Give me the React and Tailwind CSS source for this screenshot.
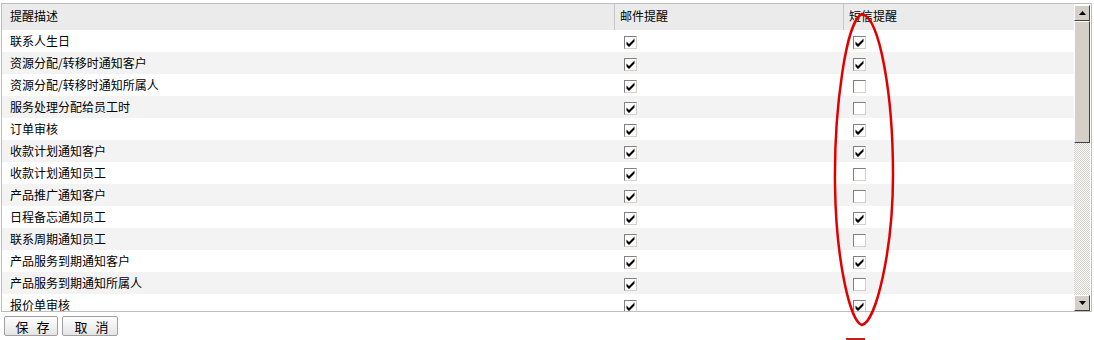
import React from 'react';

const rows = [
  ['联系人生日', true],
  ['资源分配/转移时通知客户', true],
  ['资源分配/转移时通知所属人', false],
  ['服务处理分配给员工时', false],
  ['订单审核', true],
  ['收款计划通知客户', true],
  ['收款计划通知员工', false],
  ['产品推广通知客户', false],
  ['日程备忘通知员工', true],
  ['联系周期通知员工', false],
  ['产品服务到期通知客户', true],
  ['产品服务到期通知所属人', false],
  ['报价单审核', true],
];

const Box = ({ checked }) => (
  <div className="w-[13px] h-[13px] border border-t-[#808080] border-l-[#808080] border-r-[#d4d0c8] border-b-[#d4d0c8] bg-white flex items-center justify-center">
    {checked && (
      <svg width="9" height="9" viewBox="0 0 9 9">
        <path d="M0.5 3.5 L3 6 L8.5 0.5 L8.5 3.5 L3 9 L0.5 6.5 Z" fill="#000" />
      </svg>
    )}
  </div>
);

const Arrow = ({ down }) => (
  <div className="w-[16px] h-[16px] bg-[#d4d0c8] border border-t-white border-l-white border-r-[#404040] border-b-[#404040] flex items-center justify-center">
    <svg width="7" height="4" viewBox="0 0 7 4">
      <path d={down ? 'M0 0 H7 L3.5 4 Z' : 'M0 4 H7 L3.5 0 Z'} fill="#000" />
    </svg>
  </div>
);

const Btn = ({ a, b, w }) => (
  <button className={`${w} h-[20px] border border-[#a0a0a0] rounded-[2px] bg-gradient-to-b from-white to-[#e4e4e4] text-[13px] leading-none flex items-center justify-center gap-[8px] pl-[3px]`}>
    <span>{a}</span>
    <span>{b}</span>
  </button>
);

export default function App() {
  return (
    <div className="relative w-[1094px] h-[340px] bg-white text-[12px] text-black overflow-hidden" style={{ fontFamily: '"Noto Sans CJK SC", "Noto Sans", sans-serif' }}>
      <div className="ml-[1px] mt-[3px] w-[1091px] h-[309px] border border-[#bdbdbd] flex">
        <div className="flex-1 overflow-hidden">
          <div className="grid grid-cols-[612px_229px_1fr] h-[26px] bg-[#ebebeb] items-center">
            <div className="pl-[8px] pb-[3px]">提醒描述</div>
            <div className="h-full border-l border-[#c8c8c8] pl-[5px] pt-[3px]">邮件提醒</div>
            <div className="h-full border-l border-[#c8c8c8] pl-[5px] pt-[3px]">短信提醒</div>
          </div>
          {rows.map(([label, sms], i) => (
            <div key={label} className={`grid grid-cols-[612px_229px_1fr] h-[22px] items-center ${i % 2 ? 'bg-[#f3f3f3]' : 'bg-white'}`}>
              <div className="pl-[8px]">{label}</div>
              <div className="pl-[10px] pt-[2px]"><Box checked /></div>
              <div className="pl-[10px] pt-[2px]"><Box checked={sms} /></div>
            </div>
          ))}
        </div>
        <div className="w-[16px] mr-[1px] mt-[1px] flex flex-col">
          <Arrow />
          <div className="h-[122px] bg-[#d4d0c8] border border-t-white border-l-white border-r-[#404040] border-b-[#404040]" />
          <div className="flex-1 bg-[repeating-conic-gradient(#d4d0c8_0_25%,#ffffff_0_50%)] bg-[length:2px_2px]" />
          <Arrow down />
        </div>
      </div>
      <div className="flex gap-[4px] ml-[4px] mt-[4px]">
        <Btn a="保" b="存" w="w-[54px]" />
        <Btn a="取" b="消" w="w-[56px]" />
      </div>
      <svg className="absolute left-0 top-0 pointer-events-none" width="1094" height="340">
        <path d="M862 14 C846 20 834 110 835 185 C836 260 850 322 862 325 C876 322 893 250 893 175 C893 95 880 18 862 14 Z" fill="none" stroke="#e00000" strokeWidth="2.5" />
      </svg>
      <div className="absolute left-[846px] top-[338px] w-[19px] h-[2px] bg-[#c02020]" />
    </div>
  );
}
